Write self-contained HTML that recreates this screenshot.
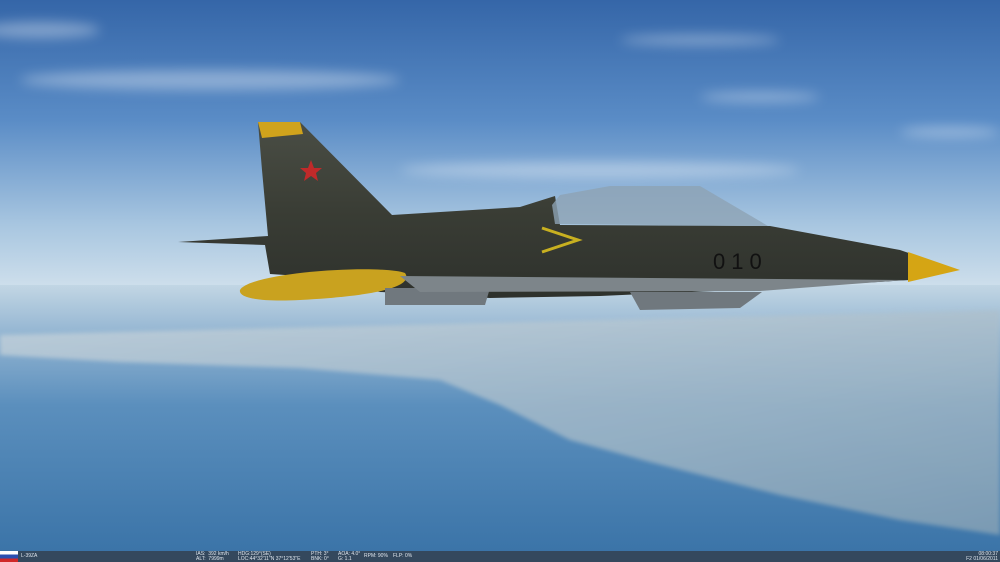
<!DOCTYPE html>
<html><head><style>
body{margin:0;width:1000px;height:562px;overflow:hidden;font-family:"Liberation Sans",sans-serif}
.bar{position:absolute;left:0;top:551px;width:1000px;height:11px;background:#34485d;color:#dfe6ee;font-size:5px;line-height:5px}
.bar span{position:absolute}
</style></head><body>
<svg width="1000" height="562" style="position:absolute;left:0;top:0">
<defs>
<linearGradient id="sky" x1="0" y1="0" x2="0" y2="1">
<stop offset="0" stop-color="#3566a8"/><stop offset="0.4" stop-color="#5a8cc6"/><stop offset="0.75" stop-color="#a8c6e0"/><stop offset="1" stop-color="#d6e4ee"/></linearGradient>
<linearGradient id="sea" x1="0" y1="0" x2="0" y2="1">
<stop offset="0" stop-color="#c2d6e4"/><stop offset="0.2" stop-color="#8fb2d0"/><stop offset="0.45" stop-color="#5b8fbd"/><stop offset="1" stop-color="#3b74a8"/></linearGradient>
<linearGradient id="land" x1="0" y1="0" x2="1" y2="1">
<stop offset="0" stop-color="#c8d4dc"/><stop offset="0.6" stop-color="#a9bcc8"/><stop offset="1" stop-color="#8ea6b6"/></linearGradient>
<filter id="b"><feGaussianBlur stdDeviation="6"/></filter>
<filter id="b2"><feGaussianBlur stdDeviation="2"/></filter>
<linearGradient id="fus" x1="0" y1="0" x2="0" y2="1">
<stop offset="0" stop-color="#4a4e45"/><stop offset="0.5" stop-color="#3a3d35"/><stop offset="1" stop-color="#2e312c"/></linearGradient>
</defs>
<rect width="1000" height="300" fill="url(#sky)"/>
<rect y="285" width="1000" height="267" fill="url(#sea)"/>
<path d="M0 335 L1000 310 L1000 535 L900 520 L780 495 L650 462 L570 440 L500 405 L440 380 L300 368 L120 362 L0 355Z" fill="url(#land)" opacity="0.75" filter="url(#b2)"/>
<g fill="#fff" opacity="0.35" filter="url(#b)">
<ellipse cx="210" cy="80" rx="190" ry="10"/><ellipse cx="40" cy="30" rx="60" ry="8"/><ellipse cx="950" cy="132" rx="50" ry="5"/><ellipse cx="760" cy="97" rx="60" ry="5"/><ellipse cx="700" cy="40" rx="80" ry="5"/><ellipse cx="600" cy="170" rx="200" ry="8"/>
</g>
<!-- aircraft -->
<path d="M258 122 L300 122 L392 215 L520 207 L555 196 L560 225 L770 226 L900 250 L958 270 L910 280 L760 289 L600 296 L490 298 L380 292 L300 276 L270 274 L265 245 L178 242 L268 236 L262 170Z" fill="url(#fus)"/>
<path d="M258 122 L300 122 L303 134 L262 138Z" fill="#d0a31c"/>
<path d="M908 252 L960 270 L908 282Z" fill="#d5a514"/>
<path d="M552 205 L560 195 L610 186 L700 186 L768 226 L555 224Z" fill="#8da2b4" opacity="0.8"/>
<path d="M240 290 C250 272 380 264 405 273 C412 283 395 295 300 300 C260 302 238 298 240 290Z" fill="#c9a21f"/>
<path d="M385 288 L490 288 L485 305 L385 305Z" fill="#70787e"/>
<path d="M630 292 L762 292 L740 308 L640 310Z" fill="#70787e"/>
<path d="M400 276 L905 280 L760 291 L420 292Z" fill="#7d858a"/>
<polygon points="311,160 314,168 322,168 316,173 318,181 311,176 304,181 306,173 300,168 308,168" fill="#c02a2a"/>
<path d="M542 228 L578 240 L542 252" fill="none" stroke="#c8b020" stroke-width="3"/>
<text x="713" y="269" font-family="Liberation Sans,sans-serif" font-size="22" fill="#111" letter-spacing="6">010</text>
</svg>
<div class="bar">
<span style="left:0;top:0;width:18px;height:11px;background:linear-gradient(#fff 0 33%,#2b4fb0 33% 66%,#d02828 66%)"></span>
<span style="left:21px;top:3px">L-39ZA</span>
<span style="left:196px;top:1px">IAS:&nbsp;&nbsp;392 km/h<br>ALT:&nbsp;&nbsp;7999m</span>
<span style="left:238px;top:1px">HDG:129°(SE)<br>LOC:44°32'11"N 37°12'53"E</span>
<span style="left:311px;top:1px">PTH: 3°<br>BNK: 0°</span>
<span style="left:338px;top:1px">AOA: 4.0°<br>G: 1.1</span>
<span style="left:364px;top:3px">RPM: 90%</span>
<span style="left:393px;top:3px">FLP: 0%</span>
<span style="right:2px;top:1px;text-align:right">08:00:37<br>F2 01/06/2011</span>
</div>
</body></html>
